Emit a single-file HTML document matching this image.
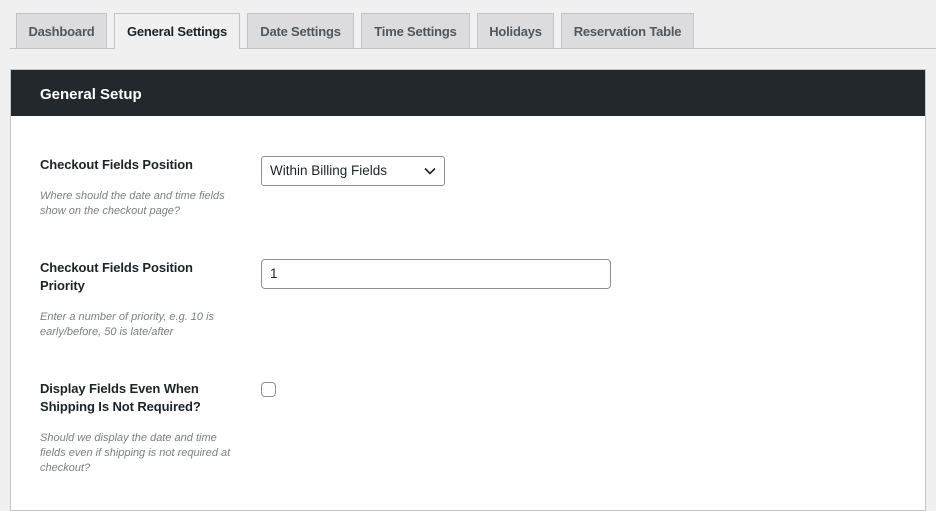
<!DOCTYPE html>
<html><head><style>
body{margin:0;width:936px;height:500px;background:#f0f0f1;font-family:"Liberation Sans",sans-serif;position:relative;overflow:hidden;color:#1d2327}
.tabline{position:absolute;left:10px;right:0;top:48px;border-top:1px solid #c3c4c7}
.tab{position:absolute;top:13px;height:34px;border:1px solid #c3c4c7;background:#dcdcde;color:#50575e;font-size:13px;font-weight:bold;line-height:35px;text-align:center;box-sizing:content-box;letter-spacing:-0.2px}
.tab.a{background:#f0f0f1;color:#1d2327;height:35px;border-bottom:none}
.panel{position:absolute;left:10px;top:69px;width:914px;height:440px;background:#fff;border:1px solid #c3c4c7}
.hd{height:46px;background:#23282d;color:#fff;font-weight:bold;font-size:15px;line-height:50px;padding-left:29px}
.lbl{position:absolute;left:40px;font-size:13px;font-weight:bold;line-height:18px;color:#1d2327;width:185px;letter-spacing:-0.1px}
.desc{position:absolute;left:40px;font-size:11px;font-style:italic;color:#7a7f84;line-height:15px;width:200px}
.sel{position:absolute;left:261px;top:156px;border:1px solid #8c8f94;border-radius:3px;background:#fff;font-size:13.5px;line-height:28px;padding-left:8px;box-sizing:border-box;width:184px;height:30px}
.inp{position:absolute;left:261px;top:259px;width:350px;height:30px;border:1px solid #8c8f94;border-radius:4px;box-sizing:border-box;font-size:13.5px;line-height:28px;padding-left:8px}
.cb{position:absolute;left:261px;top:382px;width:15px;height:15px;border:1px solid #8c8f94;border-radius:4px;box-sizing:border-box}
</style></head><body>
<div class="tabline"></div>
<div class="tab" style="left:16px;width:89px">Dashboard</div>
<div class="tab a" style="left:114px;width:124px">General Settings</div>
<div class="tab" style="left:247px;width:105px">Date Settings</div>
<div class="tab" style="left:361px;width:107px">Time Settings</div>
<div class="tab" style="left:477px;width:75px">Holidays</div>
<div class="tab" style="left:561px;width:131px">Reservation Table</div>
<div class="panel"><div class="hd">General Setup</div></div>
<div class="lbl" style="top:156px">Checkout Fields Position</div>
<div class="desc" style="top:189px">Where should the date and time fields show on the checkout page?</div>
<div class="sel">Within Billing Fields<svg style="position:absolute;right:8px;top:10px" width="12" height="8" viewBox="0 0 12 8"><path d="M1 1.5L6 6.5L11 1.5" stroke="#1d2327" stroke-width="1.6" fill="none"/></svg></div>
<div class="lbl" style="top:259px">Checkout Fields Position Priority</div>
<div class="desc" style="top:310px">Enter a number of priority, e.g. 10 is early/before, 50 is late/after</div>
<div class="inp">1</div>
<div class="lbl" style="top:380px">Display Fields Even When Shipping Is Not Required?</div>
<div class="desc" style="top:431px;width:192px">Should we display the date and time fields even if shipping is not required at checkout?</div>
<div class="cb"></div>
</body></html>
